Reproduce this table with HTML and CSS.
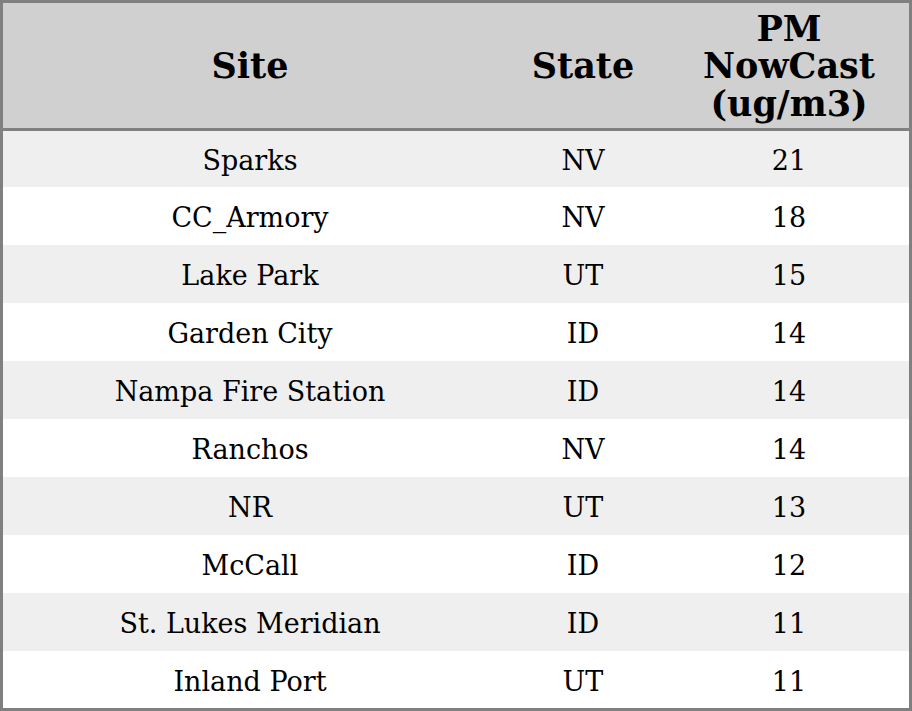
FILE: index.html
```html
<!DOCTYPE html>
<html>
<head>
<meta charset="utf-8">
<link rel="stylesheet" href="styles.css">
</head>
<body>
<table class="aq">
  <colgroup><col class="c-site"><col class="c-state"><col class="c-pm"></colgroup>
  <thead>
    <tr><th>Site</th><th>State</th><th>PM<br>NowCast<br>(ug/m3)</th></tr>
  </thead>
  <tbody>
    <tr><td>Sparks</td><td>NV</td><td>21</td></tr>
    <tr><td>CC_Armory</td><td>NV</td><td>18</td></tr>
    <tr><td>Lake Park</td><td>UT</td><td>15</td></tr>
    <tr><td>Garden City</td><td>ID</td><td>14</td></tr>
    <tr><td>Nampa Fire Station</td><td>ID</td><td>14</td></tr>
    <tr><td>Ranchos</td><td>NV</td><td>14</td></tr>
    <tr><td>NR</td><td>UT</td><td>13</td></tr>
    <tr><td>McCall</td><td>ID</td><td>12</td></tr>
    <tr><td>St. Lukes Meridian</td><td>ID</td><td>11</td></tr>
    <tr><td>Inland Port</td><td>UT</td><td>11</td></tr>
  </tbody>
</table>
</body>
</html>
```
FILE: styles.css
```css
html, body { margin: 0; padding: 0; background: #ffffff; }
.aq {
  width: 912px;
  border-collapse: separate;
  border-spacing: 0;
  border: 3px solid #808080;
  font-family: "DejaVu Serif", serif;
  color: #000;
  table-layout: fixed;
}
.c-site { width: 494px; }
.c-state { width: 172px; }
.c-pm { width: 240px; }
.aq th {
  box-sizing: border-box;
  background: #d0d0d0;
  font-size: 35px;
  font-weight: bold;
  line-height: 37.5px;
  height: 128px;
  padding: 1px 0 0 0;
  text-align: center;
  vertical-align: middle;
  border-bottom: 3px solid #808080;
}
.aq td {
  box-sizing: border-box;
  font-size: 27px;
  line-height: 30px;
  height: 58px;
  padding: 4px 0 0 0;
  text-align: center;
  vertical-align: middle;
}
.aq tbody tr:first-child td { height: 56px; }
.aq tbody tr:last-child td { height: 57px; }
.aq tbody tr:nth-child(odd) { background: #efefef; }
.aq tbody tr:nth-child(even) { background: #ffffff; }
```
